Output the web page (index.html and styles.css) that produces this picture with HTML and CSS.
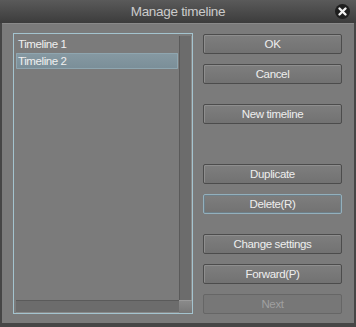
FILE: index.html
```html
<!DOCTYPE html>
<html lang="en">
<head>
  <meta charset="UTF-8">
  <title>Manage timeline</title>
  <link rel="stylesheet" href="styles.css">
</head>
<body>
  <div class="window">
    <div class="titlebar">
      <span class="title">Manage timeline</span>
      <span class="close-btn">
        <svg width="15" height="15" viewBox="0 0 15 15">
          <circle cx="7.5" cy="7.5" r="7.5" fill="#1e1e1e"/>
          <path d="M4.5 4.5 L10.5 10.5 M10.5 4.5 L4.5 10.5" stroke="#f2f2f2" stroke-width="2.4" stroke-linecap="round"/>
        </svg>
      </span>
    </div>

    <div class="content">
      <div class="listbox">
        <div class="list-main">
          <div class="items">
            <div class="item">Timeline 1</div>
            <div class="item selected">Timeline 2</div>
          </div>
          <div class="vscroll"></div>
        </div>
        <div class="list-bottom">
          <div class="hscroll"></div>
          <div class="corner"></div>
        </div>
      </div>

      <div class="buttons">
        <button class="btn">OK</button>
        <button class="btn">Cancel</button>
        <button class="btn gap-md">New timeline</button>
        <button class="btn gap-lg">Duplicate</button>
        <button class="btn focused">Delete(R)</button>
        <button class="btn gap-md">Change settings</button>
        <button class="btn">Forward(P)</button>
        <button class="btn disabled">Next</button>
      </div>
    </div>
  </div>
</body>
</html>
```

FILE: styles.css
```css
html, body {
  margin:0;
  padding:0;
  background:#3a3a3a;
  font-family:"Liberation Sans", Arial, sans-serif;
}
.window {
  width:356px;
  height:327px;
  box-sizing:border-box;
  display:flex;
  flex-direction:column;
  background:#464646;
  padding:0 2px 4px 2px;
}
.titlebar {
  height:23px;
  flex:none;
  margin:0 -2px;
  background:linear-gradient(#5a5a5a, #3c3c3c);
  display:flex;
  align-items:center;
  justify-content:center;
  position:relative;
}
.title {
  color:#cbcbcb;
  font-size:13.5px;
  letter-spacing:-0.3px;
}
.close-btn {
  position:absolute;
  right:6px;
  top:4px;
  width:15px;
  height:15px;
}
.close-btn svg { display:block; }
.content {
  flex:1;
  background:#7b7b7b;
  border-top:1px solid #8a8a8a;
  display:flex;
  padding:9px 12px 0 11px;
  gap:10px;
}
.listbox {
  width:178px;
  height:279px;
  border:1px solid #a4c4cf;
  display:flex;
  flex-direction:column;
}
.list-main {
  flex:1;
  display:flex;
}
.items {
  flex:1;
  padding:2px 1px 0 2px;
}
.item {
  height:16px;
  line-height:16px;
  font-size:11.5px;
  letter-spacing:-0.4px;
  color:#f0f0f0;
  padding-left:2px;
  margin-bottom:1px;
}
.item.selected {
  background:linear-gradient(#8699a2, #7a8e98);
  border-radius:1px;
  box-shadow:inset 0 0 0 1px #8fa6b0;
}
.vscroll {
  width:11px;
  margin:2px 0 0 0;
  background:#6c6c6c;
  border-left:1px solid #5a5a5a;
  border-right:1px solid #8a8a8a;
}
.list-bottom {
  height:13px;
  display:flex;
}
.hscroll {
  flex:1;
  margin-left:2px;
  background:#6c6c6c;
  border-top:1px solid #5a5a5a;
  border-bottom:1px solid #8a8a8a;
}
.corner {
  width:13px;
  background:linear-gradient(#8a8a8a, #777);
  border-top:1px solid #9a9a9a;
}
.buttons {
  width:139px;
  display:flex;
  flex-direction:column;
  gap:10px;
  padding-top:1px;
}
.btn {
  height:20px;
  margin:0;
  padding:0;
  font-family:"Liberation Sans", Arial, sans-serif;
  font-size:11.5px;
  letter-spacing:-0.35px;
  color:#eeeeee;
  background:linear-gradient(#7e7e7e, #727272);
  border:1px solid #4c4c4c;
  border-radius:2px;
  box-shadow:inset 1px 1px 0 #8e8e8e;
}
.btn.gap-md { margin-top:10px; }
.btn.gap-lg { margin-top:30px; }
.btn.focused {
  border-color:#93b0bd;
  box-shadow:inset 0 0 0 1px #6e7f88;
}
.btn.disabled {
  color:#a0a0a0;
  background:#777;
  border-color:#666;
  box-shadow:none;
}
```
